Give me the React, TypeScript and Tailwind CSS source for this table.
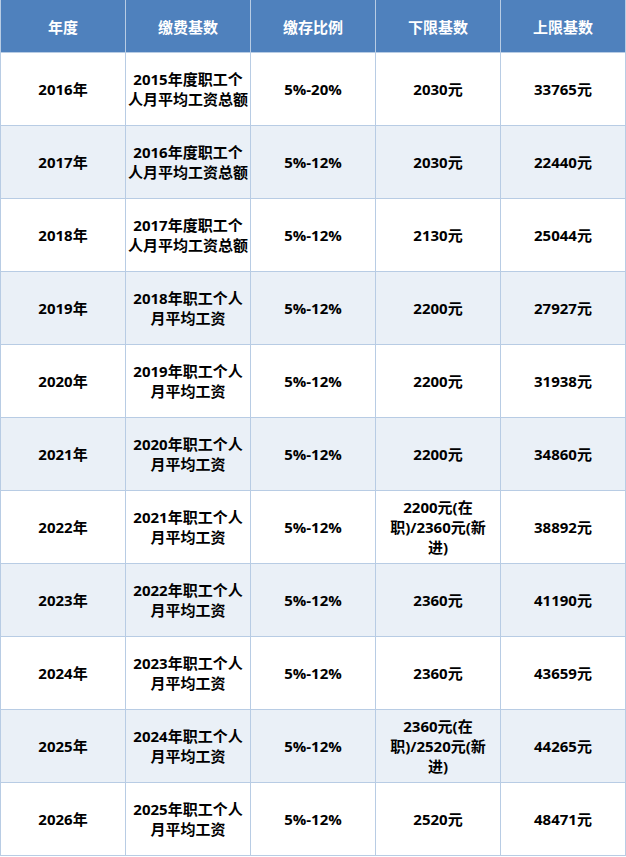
const headers = ['年度', '缴费基数', '缴存比例', '下限基数', '上限基数'];

type Row = {
  year: string;
  base: string[];
  ratio: string;
  low: string[];
  high: string;
};

const rows: Row[] = [
  { year: '2016年', base: ['2015年度职工个', '人月平均工资总额'], ratio: '5%-20%', low: ['2030元'], high: '33765元' },
  { year: '2017年', base: ['2016年度职工个', '人月平均工资总额'], ratio: '5%-12%', low: ['2030元'], high: '22440元' },
  { year: '2018年', base: ['2017年度职工个', '人月平均工资总额'], ratio: '5%-12%', low: ['2130元'], high: '25044元' },
  { year: '2019年', base: ['2018年职工个人', '月平均工资'], ratio: '5%-12%', low: ['2200元'], high: '27927元' },
  { year: '2020年', base: ['2019年职工个人', '月平均工资'], ratio: '5%-12%', low: ['2200元'], high: '31938元' },
  { year: '2021年', base: ['2020年职工个人', '月平均工资'], ratio: '5%-12%', low: ['2200元'], high: '34860元' },
  { year: '2022年', base: ['2021年职工个人', '月平均工资'], ratio: '5%-12%', low: ['2200元(在', '职)/2360元(新', '进)'], high: '38892元' },
  { year: '2023年', base: ['2022年职工个人', '月平均工资'], ratio: '5%-12%', low: ['2360元'], high: '41190元' },
  { year: '2024年', base: ['2023年职工个人', '月平均工资'], ratio: '5%-12%', low: ['2360元'], high: '43659元' },
  { year: '2025年', base: ['2024年职工个人', '月平均工资'], ratio: '5%-12%', low: ['2360元(在', '职)/2520元(新', '进)'], high: '44265元' },
  { year: '2026年', base: ['2025年职工个人', '月平均工资'], ratio: '5%-12%', low: ['2520元'], high: '48471元' },
];

function Lines({ lines }: { lines: string[] }) {
  return (
    <>
      {lines.map((l, i) => (
        <div key={i}>{l}</div>
      ))}
    </>
  );
}

export default function App() {
  return (
    <div className="w-[626px] bg-white font-['Open_Sans','Noto_Sans_CJK_SC',sans-serif]">
      <table className="w-[626px] table-fixed border-collapse border border-[#4f81bd] text-[15px] leading-[20px] font-bold">
        <thead>
          <tr className="h-[52px] bg-[#4f81bd] text-white">
            {headers.map((h) => (
              <th key={h} className="border-x border-[#b8cce4] text-center align-middle font-bold">
                {h}
              </th>
            ))}
          </tr>
        </thead>
        <tbody>
          {rows.map((r, i) => (
            <tr key={r.year} className={`h-[73px] text-black ${i % 2 === 1 ? 'bg-[#eaf0f7]' : 'bg-white'}`}>
              <td className="border border-[#b8cce4] text-center align-middle">{r.year}</td>
              <td className="border border-[#b8cce4] text-center align-middle">
                <Lines lines={r.base} />
              </td>
              <td className="border border-[#b8cce4] text-center align-middle">{r.ratio}</td>
              <td className="border border-[#b8cce4] text-center align-middle">
                <Lines lines={r.low} />
              </td>
              <td className="border border-[#b8cce4] text-center align-middle">{r.high}</td>
            </tr>
          ))}
        </tbody>
      </table>
    </div>
  );
}
